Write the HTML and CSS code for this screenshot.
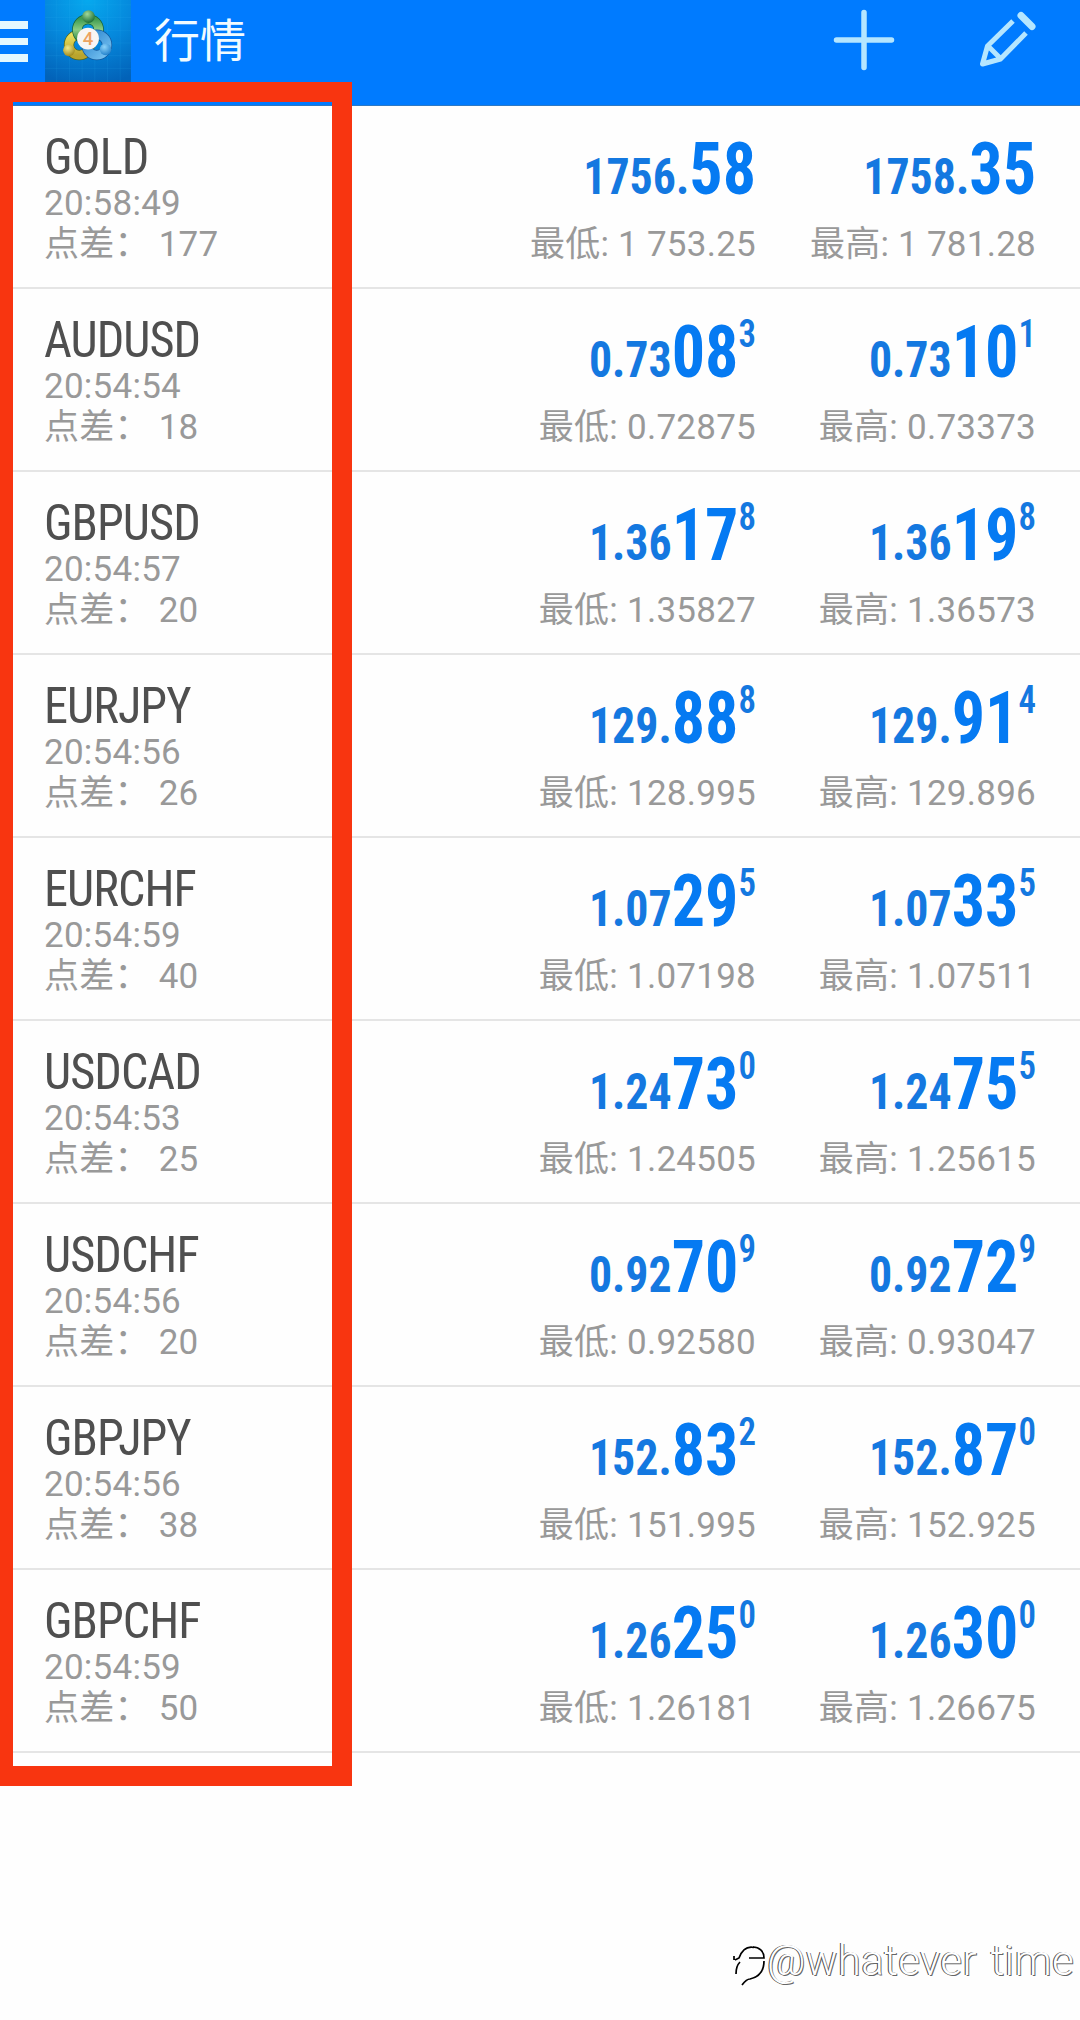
FILE: index.html
```html
<!DOCTYPE html>
<html lang="zh-CN">
<head>
<meta charset="utf-8">
<title>行情</title>
<link rel="stylesheet" href="styles.css">
</head>
<body>
<header class="bar">
  <div class="menu"><i></i><i></i><i></i></div>
  <svg class="logo" viewBox="0 0 88 84">
    <defs>
      <radialGradient id="bg" cx=".5" cy="0" r="1.05"><stop offset="0" stop-color="#06a9ee"/><stop offset=".5" stop-color="#0588dc"/><stop offset="1" stop-color="#0262b8"/></radialGradient>
      <linearGradient id="gr" x1="0" y1="0" x2="0" y2="1"><stop offset="0" stop-color="#3f9c51"/><stop offset=".5" stop-color="#8ccc83"/><stop offset="1" stop-color="#2f8a45"/></linearGradient>
      <linearGradient id="ye" x1="0" y1="0" x2="0" y2="1"><stop offset="0" stop-color="#e9df5c"/><stop offset="1" stop-color="#b9a42c"/></linearGradient>
      <linearGradient id="bl" x1="0" y1="0" x2="1" y2="1"><stop offset="0" stop-color="#2d86cf"/><stop offset="1" stop-color="#74c0f0"/></linearGradient>
      <radialGradient id="gb" cx=".4" cy=".3" r=".7"><stop offset="0" stop-color="#a2d99a"/><stop offset="1" stop-color="#1f7036"/></radialGradient>
      <radialGradient id="yb" cx=".4" cy=".3" r=".7"><stop offset="0" stop-color="#f1e98a"/><stop offset="1" stop-color="#a38c1d"/></radialGradient>
      <radialGradient id="bb" cx=".4" cy=".3" r=".7"><stop offset="0" stop-color="#8fd4fa"/><stop offset="1" stop-color="#2583cd"/></radialGradient>
    </defs>
    <rect width="88" height="84" fill="url(#bg)"/>
    <path d="M12 0V84M25 0V84M38 0V84M51 0V84M64 0V84M77 0V84M0 5H88M0 18H88M0 31H88M0 44H88M0 57H88M0 70H88" stroke="#36b5f4" stroke-opacity=".13"/>
    <circle cx="35" cy="46" r="10.500" fill="none" stroke="#4d641d" stroke-width="10.500"/>
    <circle cx="35" cy="46" r="10.500" fill="none" stroke="url(#ye)" stroke-width="9"/>
    <circle cx="44" cy="30.500" r="11" fill="none" stroke="#17633a" stroke-width="10.500"/>
    <circle cx="44" cy="30.500" r="11" fill="none" stroke="url(#gr)" stroke-width="9"/>
    <circle cx="53" cy="46" r="10.500" fill="none" stroke="#12579c" stroke-width="10.500"/>
    <circle cx="53" cy="46" r="10.500" fill="none" stroke="url(#bl)" stroke-width="9"/>
    <circle cx="44.500" cy="17" r="6.500" fill="url(#gb)"/>
    <circle cx="24.500" cy="51.500" r="6" fill="url(#yb)"/>
    <circle cx="62" cy="50.500" r="6" fill="url(#bb)"/>
    <circle cx="44" cy="39.500" r="11.200" fill="#f8f5f3"/>
    <text class="four" x="44" y="46" text-anchor="middle">4</text>
  </svg>
  <h1 class="title">行情</h1>
  <svg class="plus" viewBox="0 0 64 64"><path d="M32 4.500V59.500M4.500 32H59.500"/></svg>
  <svg class="pencil" viewBox="0 0 60 60"><path class="cap" d="M43 5.500L54 16.500"/><path class="line" d="M35 11L9.500 36L4.500 54L22.500 49L48 23M10.500 36.500L22 48"/></svg>
</header>
<main class="quotes" id="quotes"></main>
<div class="frame"></div>
<div class="mark">
  <svg class="swirl" viewBox="0 0 34 42"><path d="M2 16L6 14C9 6 14 2 21 3.500M1 16V12M16 14H31C31 7 26 3 20 3M31 17C31 28 26 33 17 35C14 35 12 37 9 41M7 18C4 21 3 25 3 30"/></svg>
  <span>@whatever time</span>
</div>
<script src="quotes.js"></script>
</body>
</html>
```
FILE: styles.css
```css
body {
  margin: 0;
  height: 2020px;
  position: relative;
  overflow: hidden;
  background: #fefefe;
  font-family: Roboto, "Noto Sans CJK SC", sans-serif;
}
.bar {
  height: 105px;
  display: flex;
  align-items: flex-start;
  background: #007bff;
  border-bottom: 1px solid #2e79c4;
}
.menu {
  width: 28px;
  margin-right: 16px;
  padding-top: 21px;
  display: flex;
  flex-direction: column;
  gap: 9px;
}
.menu i { height: 7.500px; background: #e4f8ff; }
.logo { width: 88px; height: 82px; }
.four { font: 500 19px Roboto, sans-serif; fill: #eda35f; }
.title {
  margin: 0 auto 0 22px;
  font-weight: 400;
  font-size: 46px;
  line-height: 82px;
  color: #f2fbff;
}
.plus { width: 64px; height: 64px; margin: 8px 82px 0 0; }
.plus path { fill: none; stroke: #b5e6ff; stroke-width: 5.500; stroke-linecap: round; }
.pencil { width: 60px; height: 60px; margin: 10px 42px 0 0; }
.pencil path { fill: none; stroke: #b5e6ff; stroke-width: 5; stroke-linejoin: round; }
.pencil .cap { stroke-width: 7; stroke-linecap: round; }
.row {
  height: 181px;
  display: grid;
  grid-template-columns: 432px 280px 280px;
  padding-left: 44px;
  border-bottom: 2px solid #e5e5e5;
}
.sym { padding-top: 26px; }
.name {
  height: 51px;
  font-size: 50px;
  line-height: 50px;
  font-stretch: 75%;
  letter-spacing: -1px;
  color: #4f4f4f;
  transform: scaleX(.967);
  transform-origin: left;
}
.sub {
  font-size: 35px;
  line-height: 41px;
  letter-spacing: .25px;
  color: #999;
  white-space: pre;
}
.quote { padding-top: 24px; text-align: right; }
.price {
  height: 80px;
  font-size: 72px;
  line-height: 80px;
  font-weight: 700;
  font-stretch: 75%;
  color: #057af2;
  white-space: nowrap;
  transform: scaleX(.917);
  transform-origin: right;
}
.price small { font-size: 50px; line-height: 0; color: #1478e0; }
.price sup { font-size: 38px; line-height: 0; vertical-align: 30px; font-weight: 600; color: #1478e0; }
.quote .sub { margin-top: 14px; }
.frame {
  position: absolute;
  left: -7px;
  top: 82px;
  width: 319px;
  height: 1664px;
  border: 20px solid #f83510;
}
.mark {
  position: absolute;
  left: 733px;
  top: 1935px;
  display: flex;
  align-items: center;
  color: #fff;
  font-size: 42px;
  line-height: 48px;
  font-weight: 300;
  letter-spacing: .4px;
  word-spacing: 3px;
  white-space: nowrap;
}
.mark span { text-shadow: -1px 0 0 #444, 1px 1px 0 #666; }
.swirl { width: 34px; height: 42px; margin-top: 9px; }
.swirl path { fill: none; stroke: #000; stroke-width: 1.700; }
```
FILE: quotes.js
```js
const quotes = [
  ["GOLD", "20:58:49", "177", "1756.|58|", "1 753.25", "1758.|35|", "1 781.28"],
  ["AUDUSD", "20:54:54", "18", "0.73|08|3", "0.72875", "0.73|10|1", "0.73373"],
  ["GBPUSD", "20:54:57", "20", "1.36|17|8", "1.35827", "1.36|19|8", "1.36573"],
  ["EURJPY", "20:54:56", "26", "129.|88|8", "128.995", "129.|91|4", "129.896"],
  ["EURCHF", "20:54:59", "40", "1.07|29|5", "1.07198", "1.07|33|5", "1.07511"],
  ["USDCAD", "20:54:53", "25", "1.24|73|0", "1.24505", "1.24|75|5", "1.25615"],
  ["USDCHF", "20:54:56", "20", "0.92|70|9", "0.92580", "0.92|72|9", "0.93047"],
  ["GBPJPY", "20:54:56", "38", "152.|83|2", "151.995", "152.|87|0", "152.925"],
  ["GBPCHF", "20:54:59", "50", "1.26|25|0", "1.26181", "1.26|30|0", "1.26675"]
];

function quote(price, label, limit) {
  const [lead, big, tip] = price.split("|");
  return `<div class="quote"><div class="price"><small>${lead}</small>${big}${tip ? `<sup>${tip}</sup>` : ""}</div>` +
    `<div class="sub">${label}: ${limit}</div></div>`;
}

document.getElementById("quotes").innerHTML = quotes.map(([name, time, spread, bid, low, ask, high]) =>
  `<section class="row"><div class="sym"><div class="name">${name}</div><div class="sub">${time}</div>` +
  `<div class="sub">点差： ${spread}</div></div>${quote(bid, "最低", low)}${quote(ask, "最高", high)}</section>`
).join("");
```
